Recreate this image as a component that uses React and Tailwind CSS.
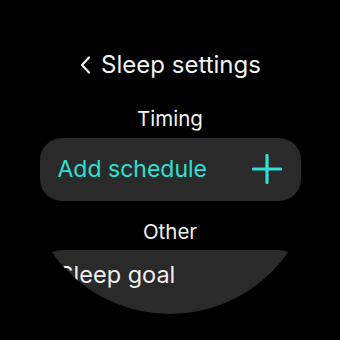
import React from "react";

export default function App() {
  return (
    <div className="w-[340px] h-[340px] bg-black flex items-center justify-center" style={{ fontFamily: "Inter, 'Noto Sans', sans-serif" }}>
      <div className="w-[288px] h-[288px] rounded-full overflow-hidden bg-black flex flex-col items-center">
        <div className="mt-[27px] h-[30px] flex items-center text-[24px] text-[#f2f2f2] leading-none">
          <svg width="14" height="20" viewBox="0 0 14 20" className="mr-[8px]">
            <path d="M10 2.5 L3 10 L10 17.5" fill="none" stroke="#f2f2f2" strokeWidth="2.2" strokeLinecap="round" strokeLinejoin="round" />
          </svg>
          <span>Sleep settings</span>
        </div>
        <div className="mt-[32px] h-[22px] flex items-center text-[20.5px] text-[#f2f2f2] leading-none">Timing</div>
        <div className="mt-[8px] w-[261px] h-[63px] shrink-0 rounded-[22px] bg-[#2a2a2a] flex items-center justify-between pl-[18px] pr-[19px]">
          <span className="text-[23px] text-[#2ee0d6] leading-none">Add schedule</span>
          <svg width="30" height="30" viewBox="0 0 30 30">
            <path d="M15 1.5 V28.5 M1.5 15 H28.5" stroke="#2ee0d6" strokeWidth="3.2" strokeLinecap="round" />
          </svg>
        </div>
        <div className="mt-[21px] h-[22px] flex items-center text-[20.5px] text-[#f2f2f2] leading-none">Other</div>
        <div className="mt-[8px] w-[261px] h-[80px] shrink-0 rounded-[22px] bg-[#2a2a2a] flex items-start pl-[19px] pt-[13px]">
          <span className="text-[23.5px] text-[#f2f2f2] leading-none">Sleep goal</span>
        </div>
      </div>
    </div>
  );
}
